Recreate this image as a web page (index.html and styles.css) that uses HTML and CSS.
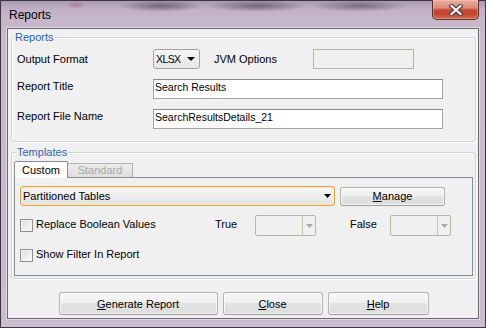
FILE: index.html
```html
<!DOCTYPE html>
<html lang="en">
<head>
<meta charset="utf-8">
<title>Reports</title>
<link rel="stylesheet" href="styles.css">
</head>
<body>
<div class="window">
  <header class="titlebar">
    <span class="title">Reports</span>
    <button class="close-btn" type="button" aria-label="Close">
      <svg width="14" height="12" viewBox="0 0 14 12" aria-hidden="true">
        <path d="M2.5 2 L11.5 10 M11.5 2 L2.5 10" stroke="#4a3c40" stroke-width="4.4" stroke-linecap="square" fill="none"/>
        <path d="M2.5 2 L11.5 10 M11.5 2 L2.5 10" stroke="#ffffff" stroke-width="2.2" stroke-linecap="square" fill="none"/>
      </svg>
    </button>
  </header>

  <main class="client">
    <fieldset class="group group-reports">
      <legend>Reports</legend>
      <div class="form-grid">
        <span class="lbl lbl-mid">Output Format</span>
        <div class="inline-row">
          <div class="select-format">
            <span class="sel-val">XLSX</span>
            <svg class="arrow" width="8" height="4" viewBox="0 0 8 4" aria-hidden="true"><path d="M0 0 H8 L4 4 Z" fill="#000"/></svg>
          </div>
          <span class="lbl jvm-lbl">JVM Options</span>
          <div class="field field-disabled field-jvm"></div>
        </div>

        <span class="lbl">Report Title</span>
        <div class="field field-wide">Search Results</div>

        <span class="lbl">Report File Name</span>
        <div class="field field-wide">SearchResultsDetails_21</div>
      </div>
    </fieldset>

    <fieldset class="group group-templates">
      <legend>Templates</legend>
      <div class="tabs">
        <div class="tab tab-active">Custom</div>
        <div class="tab tab-disabled">Standard</div>
      </div>
      <div class="tab-panel">
        <div class="panel-row row-combo">
          <div class="combo">
            <span>Partitioned Tables</span>
            <svg class="arrow" width="7" height="4" viewBox="0 0 7 4" aria-hidden="true"><path d="M0 0 H7 L3.5 4 Z" fill="#000"/></svg>
          </div>
          <button class="btn btn-manage" type="button"><u>M</u>anage</button>
        </div>

        <div class="panel-row row-check">
          <label class="check-wrap"><span class="checkbox"></span><span class="check-text">Replace Boolean Values</span></label>
          <span class="bool-lbl">True</span>
          <div class="dcombo">
            <span class="dcombo-field"></span>
            <span class="dcombo-btn"><svg width="7" height="4" viewBox="0 0 7 4" aria-hidden="true"><path d="M0 0 H7 L3.5 4 Z" fill="#a9a9a9"/></svg></span>
          </div>
          <span class="bool-lbl false-lbl">False</span>
          <div class="dcombo">
            <span class="dcombo-field"></span>
            <span class="dcombo-btn"><svg width="7" height="4" viewBox="0 0 7 4" aria-hidden="true"><path d="M0 0 H7 L3.5 4 Z" fill="#a9a9a9"/></svg></span>
          </div>
        </div>

        <div class="panel-row row-check">
          <label class="check-wrap"><span class="checkbox"></span><span class="check-text">Show Filter In Report</span></label>
        </div>
      </div>
    </fieldset>

    <div class="actions">
      <button class="btn btn-generate" type="button"><u>G</u>enerate Report</button>
      <button class="btn btn-close" type="button"><u>C</u>lose</button>
      <button class="btn btn-help" type="button"><u>H</u>elp</button>
    </div>
  </main>
</div>
</body>
</html>
```

FILE: styles.css
```css
* { box-sizing: border-box; }

html, body { margin: 0; padding: 0; }

body {
  width: 486px;
  height: 328px;
  overflow: hidden;
  font-family: "Liberation Sans", Arial, sans-serif;
  font-size: 11px;
  color: #000;
  background: #c9bccd;
}

/* ---------- window frame ---------- */
.window {
  width: 486px;
  height: 328px;
  display: flex;
  flex-direction: column;
  border: 1px solid #3b3742;
  padding: 0 6px 8px 6px;
  background:
    radial-gradient(closest-side, rgba(150,60,70,.35), rgba(150,60,70,0)) 66px 0 / 18px 8px no-repeat,
    radial-gradient(closest-side, rgba(72,58,82,.62), rgba(72,58,82,0)) 118px -1px / 84px 12px no-repeat,
    radial-gradient(closest-side, rgba(72,58,82,.62), rgba(72,58,82,0)) 206px -1px / 100px 12px no-repeat,
    radial-gradient(closest-side, rgba(72,58,82,.55), rgba(72,58,82,0)) 310px -1px / 96px 12px no-repeat,
    linear-gradient(#ab9bb0 0, #c3b2c7 9px, #c8b9cc 30px, #cbbdcf 100%);
}

.titlebar {
  flex: none;
  height: 27px;
  display: flex;
  justify-content: space-between;
  align-items: flex-start;
}

.title {
  margin: 7px 0 0 2px;
  font-size: 12px;
  line-height: 14px;
}

.close-btn {
  width: 47px;
  height: 20px;
  margin-top: -1px;
  padding: 0;
  border: 1px solid #55302b;
  border-top: none;
  border-radius: 0 0 5px 5px;
  background: linear-gradient(#e9ad9f 0%, #dc8b78 42%, #c84a33 52%, #c6442c 72%, #d96a4f 100%);
  box-shadow: inset 0 0 0 1px rgba(255,220,210,.35);
  display: flex;
  align-items: center;
  justify-content: center;
}

/* ---------- client area ---------- */
.client {
  flex: 1;
  display: flex;
  flex-direction: column;
  border: 1px solid #6c6574;
  background: #f0f0f0;
  padding: 2px 2px 0 3px;
  box-shadow: 0 0 0 1px rgba(255,255,255,.45);
}

.group {
  margin: 0;
  padding: 0;
  min-width: 0;
  border: 1px solid #cdd3d7;
  border-radius: 3px;
  box-shadow: inset 1px 1px 0 #fff, 1px 1px 0 #fff;
}

.group legend {
  margin-left: 2px;
  padding: 0 1px;
  font-size: 11px;
  line-height: 13px;
  color: #2c62b3;
  background: #f0f0f0;
}

/* ---------- reports group ---------- */
.form-grid {
  display: grid;
  grid-template-columns: 136px auto;
  grid-template-rows: 20px 20px 20px;
  row-gap: 10px;
  padding: 5px 0 12px 5px;
}

.lbl {
  line-height: 13px;
  align-self: start;
  margin-top: 1px;
}

.lbl-mid {
  align-self: center;
  margin-top: 0;
}

.inline-row {
  display: flex;
  align-items: center;
}

.select-format {
  width: 47px;
  height: 20px;
  border: 1px solid #a3a3a3;
  border-radius: 3px;
  background: linear-gradient(#f5f5f5, #e6e6e6);
  display: flex;
  align-items: center;
  justify-content: space-between;
  padding: 0 4px 0 2px;
}

.sel-val {
  font-size: 10.5px;
  letter-spacing: -0.6px;
}

.jvm-lbl {
  align-self: center;
  margin: 0 0 0 14px;
  width: 99px;
}

.field {
  height: 20px;
  border: 1px solid #a4a4a4;
  border-top-color: #8a8a8a;
  background: #fff;
  padding: 0 2px 0 1px;
  font-size: 10.5px;
  line-height: 15px;
  white-space: nowrap;
}

.field-wide { width: 290px; }

.field-disabled {
  background: #f0f0f0;
  border-color: #b3b8a4;
}

.field-jvm { width: 101px; }

/* ---------- templates group ---------- */
.group-templates {
  margin-top: 4px;
  padding: 2px;
}

.tabs {
  display: flex;
  align-items: flex-end;
  height: 16px;
}

.tab {
  display: flex;
  align-items: center;
  justify-content: center;
  line-height: 13px;
}

.tab-active {
  position: relative;
  z-index: 1;
  width: 54px;
  height: 17px;
  margin-bottom: -1px;
  background: #fdfdfd;
  border: 1px solid #898c95;
  border-bottom: none;
  border-radius: 2px 2px 0 0;
}

.tab-disabled {
  width: 65px;
  height: 14px;
  border: 1px solid #b4b4b4;
  border-left: none;
  border-bottom: none;
  background: linear-gradient(#ececec, #dedede);
  color: #a8a8a8;
}

.tab-panel {
  border: 1px solid #898c95;
  background: #f0f0f0;
  padding: 8px 0 9px 5px;
  display: flex;
  flex-direction: column;
  gap: 9px;
}

.panel-row {
  display: flex;
  align-items: center;
}

.row-combo { height: 20px; }
.row-check { height: 21px; }

.combo {
  width: 315px;
  height: 20px;
  border: 1px solid #e2a43c;
  border-radius: 3px;
  background: linear-gradient(#f6f6f6, #e3e3e3);
  box-shadow: inset 0 0 0 1px #fbe7c2;
  display: flex;
  align-items: center;
  justify-content: space-between;
  padding: 0 3px 0 2px;
}

.check-wrap {
  width: 195px;
  display: flex;
  align-items: center;
}

.checkbox {
  width: 13px;
  height: 13px;
  margin-right: 3px;
  border: 1px solid #8e8f8f;
  background: linear-gradient(135deg, #dedede, #fbfbfb);
  box-shadow: inset 0 0 0 1px #f4f4f4;
}

.check-text { line-height: 13px; margin-top: -2px; }

.bool-lbl {
  width: 40px;
  line-height: 13px;
  margin-top: -3px;
}

.false-lbl { margin-left: 34px; }

.dcombo {
  width: 61px;
  height: 21px;
  border: 1px solid #b4b9a5;
  border-radius: 2px;
  background: #f0f0f0;
  display: flex;
}

.dcombo-field { flex: 1; }

.dcombo-btn {
  width: 13px;
  border-left: 1px solid #c3c7b4;
  display: flex;
  align-items: center;
  justify-content: center;
}

/* ---------- buttons ---------- */
.btn {
  height: 23px;
  padding: 0;
  font: inherit;
  color: #000;
  border: 1px solid #b2b2b2;
  border-bottom-color: #9d9d9d;
  border-radius: 3px;
  background: linear-gradient(#f7f7f7 0%, #efefef 45%, #e3e3e3 50%, #dcdcdc 100%);
  box-shadow: inset 0 0 0 1px rgba(255,255,255,.75);
  display: flex;
  align-items: center;
  justify-content: center;
}

.btn u { text-underline-offset: 1px; }

.btn-manage {
  width: 105px;
  height: 19px;
  margin-left: 5px;
}

.actions {
  display: flex;
  justify-content: center;
  gap: 5px;
  margin-top: 13px;
}

.btn-generate { width: 159px; }
.btn-close { width: 100px; }
.btn-help { width: 101px; }
```
